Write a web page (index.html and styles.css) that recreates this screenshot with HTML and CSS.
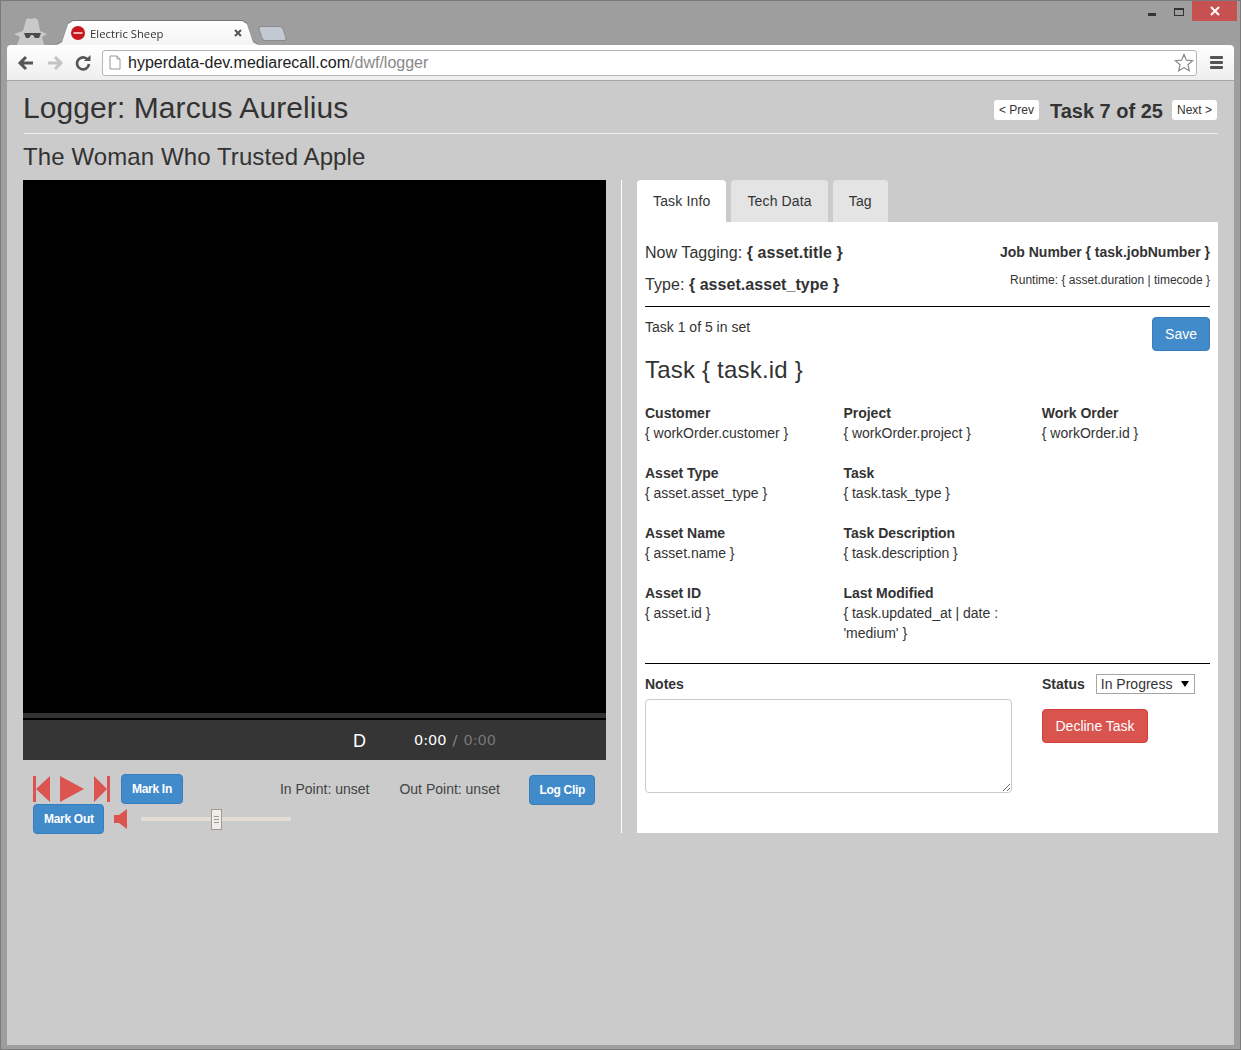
FILE: index.html
```html
<!DOCTYPE html>
<html lang="en">
<head>
    <meta charset="UTF-8">
    <title>Electric Sheep</title>
    <link rel="stylesheet" href="styles.css">
</head>
<body>
<div class="window">
    <div class="titlebar">
        <svg class="incognito" width="36" height="32" viewBox="0 0 36 32">
            <path d="M10 17 L13 6 Q14 3 18 5 Q23 3 25 6 L27 17 L34 20 L29 23 L31 31 L4 31 L7 23 L1 20 Z" fill="#c9c9c9"/>
            <path d="M11 19 H28 L26 24 H22 L20 21 H18 L16 24 H13 Z" fill="#4a4a4a"/>
        </svg>
        <div class="tab-wrap">
            <div class="tab">
                <svg class="favicon" width="14" height="14" viewBox="0 0 14 14">
                    <circle cx="7" cy="7" r="7" fill="#c8161d"/>
                    <rect x="2.5" y="6" width="9" height="2" fill="#eeb4b4"/>
                </svg>
                <span class="tab-title">Electric Sheep</span>
                <svg class="tab-close" width="8" height="8" viewBox="0 0 8 8"><path d="M1 1 L7 7 M7 1 L1 7" stroke="#555" stroke-width="2"/></svg>
            </div>
        </div>
        <div class="new-tab"></div>
        <div class="window-btns">
            <span class="win-min"></span>
            <span class="win-max"></span>
            <span class="win-close">
                <svg width="10" height="10" viewBox="0 0 10 10"><path d="M1 1 L9 9 M9 1 L1 9" stroke="#fff" stroke-width="2"/></svg>
            </span>
        </div>
    </div>
    <div class="toolbar">
        <svg class="nav-icon" width="18" height="16" viewBox="0 0 18 16"><path d="M16 8 H4 M9 2 L3 8 L9 14" fill="none" stroke="#555" stroke-width="3"/></svg>
        <svg class="nav-icon" width="18" height="16" viewBox="0 0 18 16"><path d="M2 8 H14 M9 2 L15 8 L9 14" fill="none" stroke="#c4c4c4" stroke-width="3"/></svg>
        <svg class="nav-icon" width="16" height="16" viewBox="0 0 16 16"><path d="M13 5 A6 6 0 1 0 14 9" fill="none" stroke="#555" stroke-width="2.6"/><path d="M9 6 H15.5 V0 Z" fill="#555"/></svg>
        <div class="omnibox">
            <svg width="12" height="15" viewBox="0 0 12 15"><path d="M1 1 H8 L11 4 V14 H1 Z" fill="#fff" stroke="#999"/><path d="M8 1 V4 H11" fill="none" stroke="#999"/></svg>
            <span class="url">hyperdata-dev.mediarecall.com<span class="url-path">/dwf/logger</span></span>
            <svg class="star" width="20" height="19" viewBox="0 0 20 19"><path d="M10 1.5 L12.4 7.2 L18.6 7.7 L13.9 11.7 L15.3 17.7 L10 14.6 L4.7 17.7 L6.1 11.7 L1.4 7.7 L7.6 7.2 Z" fill="#fff" stroke="#888" stroke-width="1.2"/></svg>
        </div>
        <div class="menu-icon"><span></span><span></span><span></span></div>
    </div>

    <div class="page">
        <div class="page-header">
            <h1>Logger: Marcus Aurelius</h1>
            <div class="pager">
                <a class="pager-btn">&lt; Prev</a>
                <strong>Task 7 of 25</strong>
                <a class="pager-btn">Next &gt;</a>
            </div>
        </div>
        <h2>The Woman Who Trusted Apple</h2>

        <div class="columns">
            <div class="player-col">
                <div class="video"></div>
                <div class="video-bar">
                    <span class="bar-d">D</span>
                    <span class="bar-time">0:00</span>
                    <span class="bar-sep">/</span>
                    <span class="bar-total">0:00</span>
                </div>
                <div class="controls">
                    <div class="control-row">
                        <svg class="ctl-icon" width="18" height="26" viewBox="0 0 18 26"><path d="M0 0 H3 V26 H0 Z M17 0 V26 L3 13 Z" fill="#dc5350"/></svg>
                        <svg class="ctl-icon play" width="24" height="26" viewBox="0 0 24 26"><path d="M0 0 L24 13 L0 26 Z" fill="#dc5350"/></svg>
                        <svg class="ctl-icon" width="18" height="26" viewBox="0 0 18 26"><path d="M1 0 L14 13 L1 26 Z M14 0 H17 V26 H14 Z" fill="#dc5350"/></svg>
                        <button class="btn btn-blue btn-sm mark-in">Mark In</button>
                        <span class="point in-point">In Point: unset</span>
                        <span class="point out-point">Out Point: unset</span>
                        <button class="btn btn-blue btn-sm log-clip">Log Clip</button>
                    </div>
                    <div class="control-row">
                        <button class="btn btn-blue btn-sm mark-out">Mark Out</button>
                        <svg class="speaker" width="13" height="20" viewBox="0 0 13 20"><path d="M0 6 H5 L13 0 V20 L5 14 H0 Z" fill="#dc5350"/></svg>
                        <div class="slider">
                            <div class="slider-thumb"><span></span><span></span><span></span></div>
                        </div>
                    </div>
                </div>
            </div>

            <div class="divider"></div>

            <div class="info-col">
                <div class="tabs">
                    <a class="tab-link active">Task Info</a>
                    <a class="tab-link">Tech Data</a>
                    <a class="tab-link">Tag</a>
                </div>
                <div class="panel">
                    <div class="asset-head">
                        <div>
                            <div class="now-line">Now Tagging: <b>{ asset.title }</b></div>
                            <div class="now-line">Type: <b>{ asset.asset_type }</b></div>
                        </div>
                        <div class="asset-right">
                            <div class="job">Job Number { task.jobNumber }</div>
                            <div class="runtime">Runtime: { asset.duration | timecode }</div>
                        </div>
                    </div>
                    <div class="rule"></div>
                    <div class="set-line">
                        <span class="set-count">Task 1 of 5 in set</span>
                        <button class="btn btn-blue btn-save">Save</button>
                    </div>
                    <h3>Task { task.id }</h3>
                    <div class="fields">
                        <div class="field"><b>Customer</b>{ workOrder.customer }</div>
                        <div class="field"><b>Project</b>{ workOrder.project }</div>
                        <div class="field"><b>Work Order</b>{ workOrder.id }</div>
                        <div class="field"><b>Asset Type</b>{ asset.asset_type }</div>
                        <div class="field"><b>Task</b>{ task.task_type }</div>
                        <div class="field"></div>
                        <div class="field"><b>Asset Name</b>{ asset.name }</div>
                        <div class="field"><b>Task Description</b>{ task.description }</div>
                        <div class="field"></div>
                        <div class="field"><b>Asset ID</b>{ asset.id }</div>
                        <div class="field"><b>Last Modified</b>{ task.updated_at | date : 'medium' }</div>
                    </div>
                    <div class="rule"></div>
                    <div class="notes-row">
                        <div class="notes">
                            <label class="notes-label">Notes</label>
                            <textarea class="notes-box"></textarea>
                        </div>
                        <div class="status">
                            <div class="status-line">
                                <label>Status</label>
                                <div class="select">In Progress<span class="select-caret"></span></div>
                            </div>
                            <button class="btn btn-red">Decline Task</button>
                        </div>
                    </div>
                </div>
            </div>
        </div>
    </div>
</div>
</body>
</html>
```

FILE: styles.css
```css
* {
    box-sizing: border-box;
}
html, body {
    margin: 0;
    height: 100%;
}
body {
    font-family: "Liberation Sans", Arial, sans-serif;
    font-size: 14px;
    color: #333;
    overflow: hidden;
}
.window {
    width: 1241px;
    height: 1050px;
    background: #9e9e9e;
    border: 1px solid #7a7a7a;
    padding: 0 6px 4px 6px;
    display: flex;
    flex-direction: column;
}
.titlebar {
    height: 44px;
    display: flex;
    align-items: flex-end;
    position: relative;
    flex-shrink: 0;
}
.incognito {
    margin: 0 0 0 6px;
    position: relative;
    top: 1px;
}
.tab-wrap {
    margin-left: 8px;
    filter: drop-shadow(0 -1px 0 #777);
}
.tab {
    width: 201px;
    height: 24px;
    background: linear-gradient(#fff, #f4f4f4);
    clip-path: polygon(0 100%, 5px 88%, 11px 12%, 16px 0, calc(100% - 16px) 0, calc(100% - 11px) 12%, calc(100% - 5px) 88%, 100% 100%);
    display: flex;
    align-items: center;
    padding: 0 16px 0 14px;
    font-family: "Open Sans", "Liberation Sans", sans-serif;
    font-size: 11.3px;
    color: #333;
}
.favicon {
    margin-right: 5px;
    flex-shrink: 0;
}
.tab-title {
    flex: 1;
}
.new-tab {
    width: 25px;
    height: 15px;
    margin: 0 0 4px 2px;
    background: #c3c9d3;
    border: 1px solid #8b8b8b;
    border-radius: 3px;
    transform: skewX(18deg);
}
.window-btns {
    position: absolute;
    top: 0;
    right: -3px;
    display: flex;
    align-items: flex-start;
}
.win-min {
    width: 8px;
    height: 3px;
    background: #333;
    margin: 12px 18px 0 0;
}
.win-max {
    width: 10px;
    height: 8px;
    border: 1px solid #333;
    border-top-width: 2px;
    margin: 7px 8px 0 0;
}
.win-close {
    width: 45px;
    height: 20px;
    background: #c75050;
    display: flex;
    align-items: center;
    justify-content: center;
}

.toolbar {
    height: 36px;
    background: linear-gradient(#fff, #eee);
    border-radius: 4px 4px 0 0;
    border-bottom: 1px solid #a5a5a5;
    display: flex;
    align-items: center;
    padding: 0 11px 0 10px;
    flex-shrink: 0;
}
.nav-icon {
    margin-right: 11px;
}
.omnibox {
    flex: 1;
    height: 26px;
    margin: 0 13px 0 0;
    background: #fff;
    border: 1px solid #b5b5b5;
    border-radius: 3px;
    display: flex;
    align-items: center;
    padding: 0 2px 0 6px;
}
.url {
    flex: 1;
    margin-left: 7px;
    font-size: 16px;
    color: #222;
    white-space: nowrap;
}
.url-path {
    color: #888;
}
.menu-icon {
    width: 13px;
    display: flex;
    flex-direction: column;
    gap: 2px;
}
.menu-icon span {
    height: 3px;
    background: #555;
    border-radius: 1px;
}

.page {
    flex: 1;
    background: #cbcbcb;
    padding: 0 16px 0 16px;
}
.page-header {
    height: 53px;
    border-bottom: 1px solid #eee;
    margin-left: 1px;
    display: flex;
    justify-content: space-between;
    align-items: flex-start;
}
h1 {
    margin: 10px 0 0 -1px;
    font-size: 30px;
    line-height: 33px;
    font-weight: normal;
    letter-spacing: .08px;
}
.pager {
    display: flex;
    align-items: center;
    margin: 19px 1px 0 0;
}
.pager strong {
    font-size: 20px;
    margin: -2px 9px 0 11px;
}
.pager-btn {
    background: #fff;
    font-size: 12px;
    line-height: 20px;
    padding: 0 5px;
    border-radius: 3px;
    margin-bottom: 4px;
}
h2 {
    margin: 9px 0 10px 0;
    font-size: 24px;
    line-height: 27px;
    font-weight: normal;
    letter-spacing: .1px;
}

.columns {
    display: flex;
    align-items: flex-start;
}
.player-col {
    width: 583px;
}
.video {
    height: 538px;
    background: #000;
    border-bottom: 5px solid #333;
}
.video-bar {
    height: 42px;
    background: #353535;
    border-top: 2px solid #000;
    display: flex;
    align-items: center;
    font-family: "DejaVu Sans", sans-serif;
    font-size: 14.5px;
    color: #fff;
}
.bar-d {
    margin: 2px 0 0 330px;
    font-family: "Liberation Sans", sans-serif;
    font-size: 18px;
}
.bar-time {
    margin-left: 48px;
}
.bar-sep {
    margin: 0 6px;
    color: #888;
}
.bar-total {
    color: #777;
}
.controls {
    padding: 14px 11px 0 10px;
}
.control-row {
    display: flex;
    align-items: center;
    height: 30px;
}
.ctl-icon {
    margin-right: 9px;
    flex-shrink: 0;
}
.point {
    font-size: 14px;
    color: #444;
    white-space: nowrap;
}
.in-point {
    margin-left: 97px;
}
.out-point {
    margin-left: 30px;
}
.speaker {
    margin-left: 10px;
}
.slider {
    width: 150px;
    height: 4px;
    margin-left: 14px;
    background: #e3ddd5;
    position: relative;
}
.slider-thumb {
    position: absolute;
    left: 70px;
    top: -8px;
    width: 11px;
    height: 21px;
    background: #f0ede8;
    border: 1px solid #a09a90;
    display: flex;
    flex-direction: column;
    justify-content: center;
    gap: 2px;
    padding: 0 2px;
}
.slider-thumb span {
    height: 1px;
    background: #999;
}

.btn {
    border: 1px solid transparent;
    border-radius: 4px;
    font-family: inherit;
    font-size: 14px;
    color: #fff;
    padding: 0 12px;
    height: 34px;
}
.btn-blue {
    background: #428bca;
    border-color: #357ebd;
}
.btn-red {
    background: #d9534f;
    border-color: #d43f3a;
    padding: 0 12.5px;
}
.btn-sm {
    font-size: 12px;
    font-weight: bold;
    letter-spacing: -.3px;
    height: 30px;
    padding: 0 10px;
}
.mark-in {
    margin-left: 1px;
}
.mark-out {
    padding-right: 9px;
}
.log-clip {
    margin: 2px 0 0 auto;
    padding: 0 9px;
}

.divider {
    width: 1px;
    height: 653px;
    background: #fff;
    margin: 0 15px;
}
.info-col {
    width: 581px;
}
.tabs {
    display: flex;
    gap: 5px;
    height: 42px;
}
.tab-link {
    background: #e4e4e4;
    border-radius: 4px 4px 0 0;
    padding: 0 16px;
    line-height: 42px;
    letter-spacing: .15px;
}
.tab-link.active {
    background: #fff;
}
.panel {
    background: #fff;
    height: 611px;
    padding: 15px 8px 0 8px;
}
.asset-head {
    display: flex;
    justify-content: space-between;
    height: 69px;
}
.now-line {
    font-size: 16px;
    line-height: 32px;
    letter-spacing: .05px;
}
.asset-right {
    text-align: right;
}
.job {
    font-weight: bold;
    line-height: 30px;
}
.runtime {
    font-size: 12px;
    line-height: 26px;
}
.rule {
    height: 1px;
    background: #000;
}
.set-line {
    display: flex;
    justify-content: space-between;
    padding-top: 10px;
    height: 44px;
}
.set-count {
    margin-top: 2px;
}
h3 {
    margin: 5px 0 0;
    font-size: 24px;
    line-height: 27px;
    font-weight: normal;
    letter-spacing: .2px;
}
.fields {
    display: grid;
    grid-template-columns: 198.4px 198.4px 168px;
    grid-auto-rows: 60px;
    margin-top: 20px;
    line-height: 20px;
    height: 260px;
}
.field {
    padding-right: 28px;
}
.field b {
    display: block;
}
.notes-row {
    display: flex;
    justify-content: space-between;
    padding-top: 10px;
}
.notes {
    width: 367px;
}
.notes-label {
    display: block;
    font-weight: bold;
    line-height: 20px;
    margin-bottom: 5px;
}
.notes-box {
    display: block;
    width: 367px;
    height: 94px;
    border: 1px solid #ccc;
    border-radius: 4px;
}
.status {
    width: 168px;
}
.status-line {
    display: flex;
    align-items: center;
    font-weight: bold;
    height: 20px;
    margin-bottom: 15px;
}
.select {
    width: 99px;
    height: 20px;
    margin-left: 11px;
    padding-left: 4px;
    border: 1px solid #a6a6a6;
    font-weight: normal;
    line-height: 18px;
    position: relative;
}
.select-caret {
    position: absolute;
    right: 5px;
    top: 6px;
    border-left: 4px solid transparent;
    border-right: 4px solid transparent;
    border-top: 6px solid #000;
}
```
